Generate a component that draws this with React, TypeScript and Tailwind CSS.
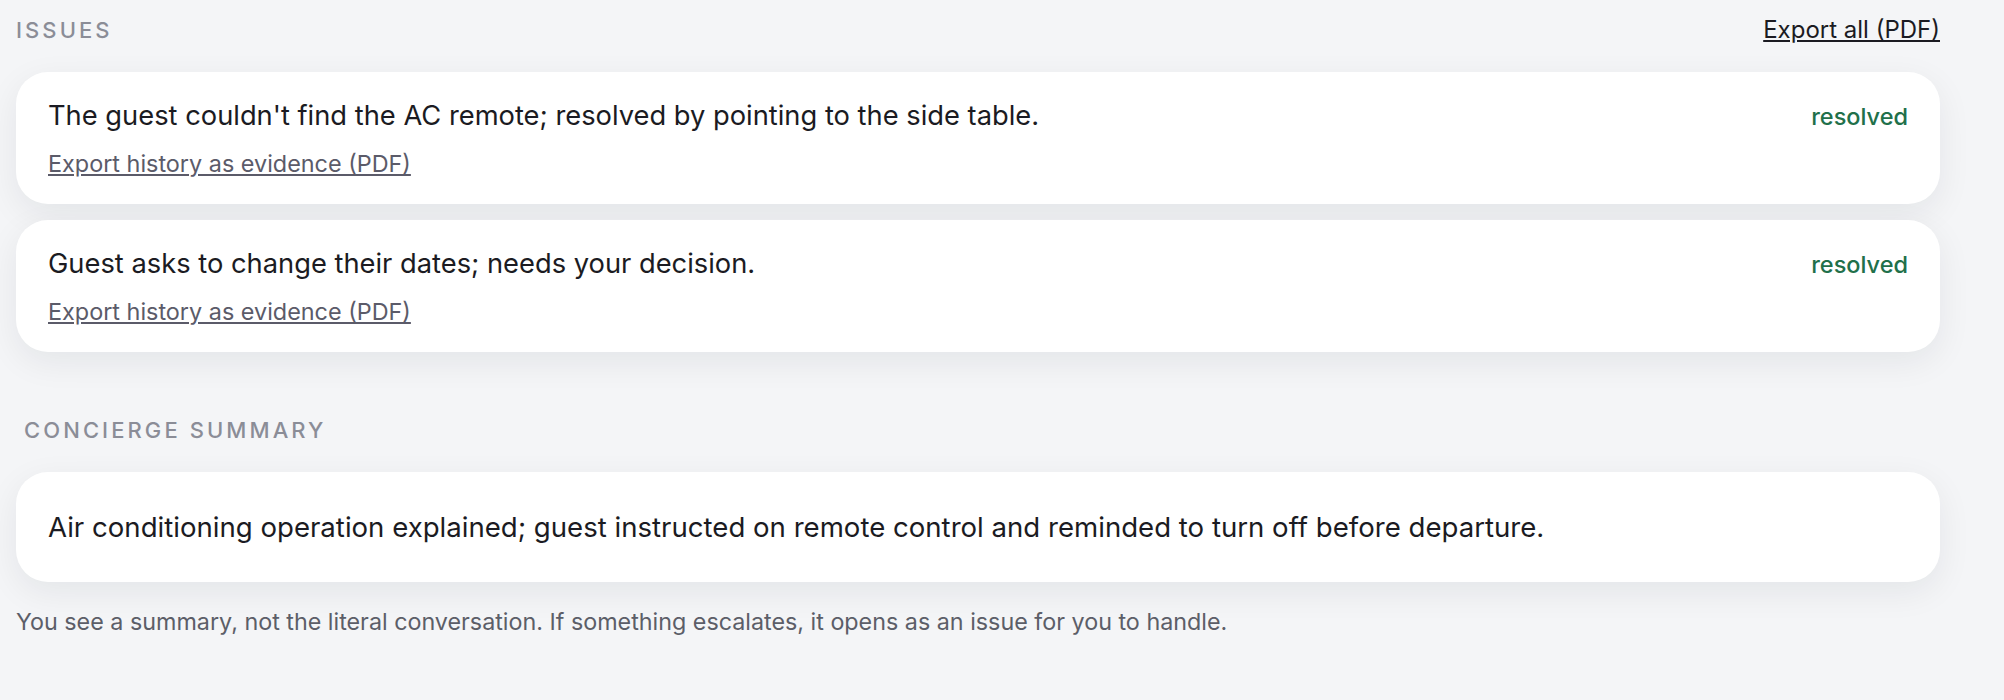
import React from "react";

const issues = [
  {
    id: 1,
    text: "The guest couldn't find the AC remote; resolved by pointing to the side table.",
    status: "resolved",
  },
  {
    id: 2,
    text: "Guest asks to change their dates; needs your decision.",
    status: "resolved",
  },
];

const font = { fontFamily: "Inter, 'Noto Sans', sans-serif" };

export default function App() {
  return (
    <div
      style={font}
      className="min-h-[700px] w-full bg-[#f4f5f7] pt-[14px] pl-4 pr-16 text-[#1b1b22]"
    >
      <header className="flex items-baseline justify-between">
        <h2 className="text-[22px] leading-7 font-medium uppercase tracking-[0.14em] text-[#8b8d97]">
          Issues
        </h2>
        <a href="#" className="text-2xl leading-8 text-[#1b1b22] underline underline-offset-2">
          Export all (PDF)
        </a>
      </header>

      <div className="mt-[26px] flex flex-col gap-4">
        {issues.map((issue) => (
          <div
            key={issue.id}
            className="flex items-start justify-between rounded-[32px] bg-white px-8 pt-[26px] pb-6 shadow-[0_10px_34px_rgba(17,24,39,0.07)]"
          >
            <div className="flex flex-col">
              <p className="text-[27.3px] leading-9">{issue.text}</p>
              <a
                href="#"
                className="mt-[14px] text-[23.4px] leading-8 text-[#5b5b69] underline underline-offset-2"
              >
                Export history as evidence (PDF)
              </a>
            </div>
            <span className="pt-[3px] text-[23.5px] leading-8 font-medium text-[#21704a]">
              {issue.status}
            </span>
          </div>
        ))}
      </div>

      <h2 className="mt-16 pl-2 text-[22px] leading-7 font-medium uppercase tracking-[0.14em] text-[#8b8d97]">
        Concierge summary
      </h2>

      <div className="mt-7 rounded-[32px] bg-white px-8 py-[33px] shadow-[0_10px_34px_rgba(17,24,39,0.07)]">
        <p className="text-[27.6px] leading-[44px]">
          Air conditioning operation explained; guest instructed on remote control and reminded to turn off before departure.
        </p>
      </div>

      <p className="mt-[24px] text-[23.3px] leading-8 text-[#5c5e68]">
        You see a summary, not the literal conversation. If something escalates, it opens as an issue for you to handle.
      </p>
    </div>
  );
}
